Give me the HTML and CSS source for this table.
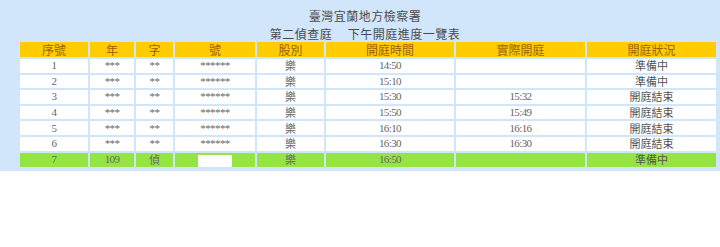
FILE: index.html
```html
<!DOCTYPE html>
<html lang="zh-Hant">
<head>
<meta charset="utf-8">
<title>開庭進度一覽表</title>
<link rel="stylesheet" href="styles.css">
</head>
<body>
<div class="board">
  <h1 class="title">臺灣宜蘭地方檢察署<br>第二偵查庭　 下午開庭進度一覽表</h1>
  <table class="schedule">
    <colgroup>
      <col class="c1"><col class="c2"><col class="c3"><col class="c4">
      <col class="c5"><col class="c6"><col class="c7"><col class="c8">
    </colgroup>
    <thead>
      <tr>
        <th>序號</th><th>年</th><th>字</th><th>號</th><th>股別</th><th>開庭時間</th><th>實際開庭</th><th>開庭狀況</th>
      </tr>
    </thead>
    <tbody>
      <tr><td class="num">1</td><td class="num">***</td><td class="num">**</td><td class="num">******</td><td class="cjk">樂</td><td class="num">14:50</td><td class="num"></td><td class="status">準備中</td></tr>
      <tr><td class="num">2</td><td class="num">***</td><td class="num">**</td><td class="num">******</td><td class="cjk">樂</td><td class="num">15:10</td><td class="num"></td><td class="status">準備中</td></tr>
      <tr><td class="num">3</td><td class="num">***</td><td class="num">**</td><td class="num">******</td><td class="cjk">樂</td><td class="num">15:30</td><td class="num">15:32</td><td class="status">開庭結束</td></tr>
      <tr><td class="num">4</td><td class="num">***</td><td class="num">**</td><td class="num">******</td><td class="cjk">樂</td><td class="num">15:50</td><td class="num">15:49</td><td class="status">開庭結束</td></tr>
      <tr><td class="num">5</td><td class="num">***</td><td class="num">**</td><td class="num">******</td><td class="cjk">樂</td><td class="num">16:10</td><td class="num">16:16</td><td class="status">開庭結束</td></tr>
      <tr><td class="num">6</td><td class="num">***</td><td class="num">**</td><td class="num">******</td><td class="cjk">樂</td><td class="num">16:30</td><td class="num">16:30</td><td class="status">開庭結束</td></tr>
      <tr class="current"><td class="num">7</td><td class="num">109</td><td class="cjk">偵</td><td><span class="blank"></span></td><td class="cjk">樂</td><td class="num">16:50</td><td class="num"></td><td class="status">準備中</td></tr>
    </tbody>
  </table>
</div>
</body>
</html>
```

FILE: styles.css
```css
html, body {
  margin: 0;
  padding: 0;
  background: #ffffff;
}

.board {
  background: #d1e6fb;
  padding: 7px 0 2px 0;
  font-family: "Noto Sans CJK TC", "Noto Sans", sans-serif;
}

.title {
  margin: 0;
  text-align: center;
  color: #4a4a4a;
  font-size: 12px;
  letter-spacing: 0.5px;
  font-weight: normal;
  line-height: 17.5px;
  padding-left: 10px;
}

.schedule {
  margin-top: -2px;
  margin-left: 18px;
  width: 700px;
  table-layout: fixed;
  border-collapse: separate;
  border-spacing: 2px;
}

.c1 { width: 68px; }
.c2 { width: 44px; }
.c3 { width: 37px; }
.c4 { width: 80px; }
.c5 { width: 67px; }
.c6 { width: 128px; }
.c7 { width: 129px; }
.c8 { width: 129px; }

.schedule th {
  background: #ffcc00;
  color: #9a6200;
  font-weight: normal;
  font-size: 12px;
  height: 15px;
  line-height: 15px;
  padding: 0;
  text-align: center;
}

.schedule td {
  background: #ffffff;
  color: #666666;
  height: 13.6px;
  line-height: 13px;
  padding: 0;
  text-align: center;
  white-space: nowrap;
}

.schedule td.num {
  font-family: "Liberation Serif", serif;
  font-size: 11px;
  letter-spacing: -0.6px;
}

.schedule td.cjk {
  font-size: 11px;
  color: #6a6a6a;
}

.schedule td.status {
  font-size: 11px;
  color: #555555;
}

.schedule tr.current td {
  background: #95e542;
}

.blank {
  display: inline-block;
  width: 34px;
  height: 12px;
  background: #ffffff;
  vertical-align: middle;
}
```
